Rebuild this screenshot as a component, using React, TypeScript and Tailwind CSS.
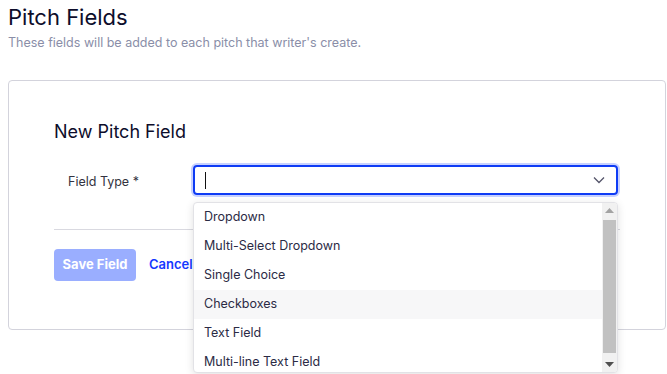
import React from "react";

const options = [
  "Dropdown",
  "Multi-Select Dropdown",
  "Single Choice",
  "Checkboxes",
  "Text Field",
  "Multi-line Text Field",
];

export default function App() {
  return (
    <div className="relative h-[374px] w-[667px] overflow-hidden bg-white px-2 font-['Inter',sans-serif]">
      <h1 className="pt-[4px] text-[22px] leading-[27px] text-[#0d0d2b]">Pitch Fields</h1>
      <p className="mt-[3px] text-[12.5px] leading-[18px] text-[#8a8ea8]">
        These fields will be added to each pitch that writer&apos;s create.
      </p>
      <div className="mt-[28px] h-[250px] w-[658px] rounded-[4px] border border-[#d3d3dc] px-[45px] pt-[39px]">
        <h2 className="text-[18px] leading-[24px] text-[#0d0d2b]">New Pitch Field</h2>
        <div className="mt-[21px] flex items-center">
          <label className="w-[139px] pl-[14px] pt-[5px] text-[12.5px] text-[#333340]">Field Type *</label>
          <div className="flex h-[30px] w-[425px] items-center justify-between rounded-[4px] border-2 border-[#0f3cf5] pl-[10px] pr-[10px] ring-2 ring-[#c7d1ff]">
            <span className="h-[17px] w-px bg-[#111]" />
            <svg width="14" height="14" viewBox="0 0 14 14" fill="none" stroke="#55556a" strokeWidth="1.3">
              <path d="M2 4.5 L7 9.5 L12 4.5" />
            </svg>
          </div>
        </div>
        <div className="mt-[34px] h-px w-[566px] bg-[#d9d9e0]" />
        <div className="mt-[19px] flex items-center gap-[13px]">
          <button className="h-[32px] w-[82px] rounded-[4px] bg-[#9aaeff] text-[13px] font-bold text-white">
            Save Field
          </button>
          <span className="text-[13px] font-semibold text-[#1538ff]">Cancel</span>
        </div>
      </div>

      <div className="absolute left-[193px] top-[202px] flex h-[171px] w-[425px] overflow-hidden rounded-[4px] border border-[#e2e2e6] bg-white shadow-[0_2px_8px_rgba(0,0,0,0.12)]">
        <div className="flex flex-1 flex-col">
          {options.map((o, i) => (
            <div
              key={o}
              className={`flex h-[29px] shrink-0 items-center pl-[10px] text-[12.5px] text-[#2b2b45] ${i === 3 ? "bg-[#f7f7f8]" : ""}`}
            >
              {o}
            </div>
          ))}
        </div>
        <div className="flex w-[15px] flex-col items-center bg-[#f1f1f1]">
          <div className="flex h-[15px] w-full items-center justify-center">
            <svg width="9" height="5" viewBox="0 0 9 5">
              <path d="M0 5 L4.5 0 L9 5 Z" fill="#a3a3a3" />
            </svg>
          </div>
          <div className="mt-[2px] w-[13px] flex-1 bg-[#c1c1c1]" />
          <div className="mt-[4px] flex h-[15px] w-full items-center justify-center">
            <svg width="9" height="5" viewBox="0 0 9 5">
              <path d="M0 0 L9 0 L4.5 5 Z" fill="#505050" />
            </svg>
          </div>
        </div>
      </div>
    </div>
  );
}
